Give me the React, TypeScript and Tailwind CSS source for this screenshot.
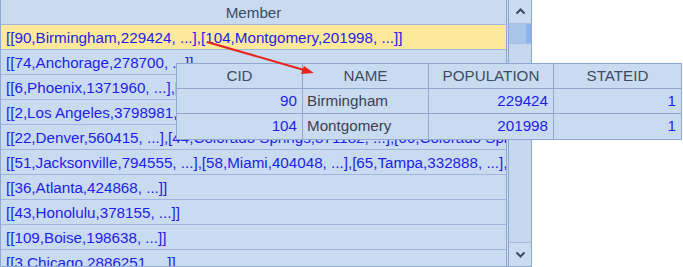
const rows = [
  "[[90,Birmingham,229424, ...],[104,Montgomery,201998, ...]]",
  "[[74,Anchorage,278700, ...]]",
  "[[6,Phoenix,1371960, ...],[8,Tucson,486699, ...]]",
  "[[2,Los Angeles,3798981, ...],[5,San Diego,1255540, ...]]",
  "[[22,Denver,560415, ...],[44,Colorado Springs,371182, ...],[66,Colorado Springs,371182, ...]]",
  "[[51,Jacksonville,794555, ...],[58,Miami,404048, ...],[65,Tampa,332888, ...],[70,Orlando,238300, ...]]",
  "[[36,Atlanta,424868, ...]]",
  "[[43,Honolulu,378155, ...]]",
  "[[109,Boise,198638, ...]]",
  "[[3,Chicago,2886251, ...]]",
];

const cities = [
  { cid: 90, name: "Birmingham", population: 229424, stateid: 1 },
  { cid: 104, name: "Montgomery", population: 201998, stateid: 1 },
];

function Chevron({ down }: { down?: boolean }) {
  return (
    <svg width="11" height="7" viewBox="0 0 11 7">
      <path
        d={down ? "M1.5 1.5 L5.5 5.5 L9.5 1.5" : "M1.5 5.5 L5.5 1.5 L9.5 5.5"}
        fill="none"
        stroke="#3d4a5c"
        strokeWidth="2"
      />
    </svg>
  );
}

export default function App() {
  return (
    <div className="relative w-[683px] h-[267px] overflow-hidden bg-white font-['Liberation_Sans',Arial,sans-serif] text-[15.2px]">
      {/* Member grid */}
      <div className="flex w-[532px] h-[267px] border-l border-b border-[#8ea8cf] bg-[#c9dbf0]">
        <div className="w-[506px] flex flex-col border-r border-[#8ea8cf] overflow-hidden">
          <div className="h-[25px] shrink-0 border-b border-[#9fb7da] bg-[#cadbf0] text-center leading-[25px] text-[#3d4b5e]">
            Member
          </div>
          {rows.map((r, i) => (
            <div
              key={i}
              className={`h-[25px] shrink-0 border-b border-[#9fb7da] px-[5px] leading-[25px] whitespace-nowrap overflow-hidden text-[#1e1eea] ${
                i === 0 ? "bg-[#fde89c]" : "bg-[#c9dbf0]"
              }`}
            >
              {r}
            </div>
          ))}
        </div>
        {/* Scrollbar */}
        <div className="ml-[1px] w-[24px] flex flex-col border-x border-[#8ea8cf] bg-[#c6d8ef]">
          <div className="h-[24px] flex items-center justify-center border-b border-[#a6bcdc] bg-[#cbdcf1]">
            <Chevron />
          </div>
          <div className="h-[20px] flex border-b border-[#a6bcdc]">
            <div className="flex-1 bg-[#a9c5ec]" />
            <div className="w-[5px] bg-[#8db4ea]" />
          </div>
          <div className="flex-1 bg-[#c6d8ef]" />
          <div className="h-[24px] flex items-center justify-center border-t border-[#a6bcdc] bg-[#cbdcf1]">
            <Chevron down />
          </div>
        </div>
      </div>

      {/* Popup detail table */}
      <div className="absolute left-[176px] top-[63px] w-[506px] border border-[#8ea8cf] bg-[#c9dbf0]">
        <div className="grid grid-cols-[126px_126px_125px_127px] h-[25px] border-b border-[#8ea8cf] text-center leading-[24px] text-[#3e4c63]">
          <div className="border-r border-[#8ea8cf]">CID</div>
          <div className="border-r border-[#8ea8cf]">NAME</div>
          <div className="border-r border-[#8ea8cf]">POPULATION</div>
          <div>STATEID</div>
        </div>
        {cities.map((c, i) => (
          <div
            key={c.cid}
            className={`grid grid-cols-[126px_126px_125px_127px] h-[25px] leading-[24px] ${
              i === 0 ? "border-b border-[#8ea8cf]" : ""
            }`}
          >
            <div className="border-r border-[#8ea8cf] px-[5px] text-right text-[#1e1eea]">{c.cid}</div>
            <div className="border-r border-[#8ea8cf] px-[4px] text-[#3b4250]">{c.name}</div>
            <div className="border-r border-[#8ea8cf] px-[5px] text-right text-[#1e1eea]">{c.population}</div>
            <div className="px-[5px] text-right text-[#1e1eea]">{c.stateid}</div>
          </div>
        ))}
      </div>

      {/* Red arrow */}
      <svg className="absolute left-0 top-0 pointer-events-none" width="683" height="267">
        <line x1="207" y1="42" x2="304" y2="70" stroke="#e8241c" strokeWidth="2" />
        <polygon points="314,73 301,74 304,66" fill="#e8241c" />
      </svg>
    </div>
  );
}
